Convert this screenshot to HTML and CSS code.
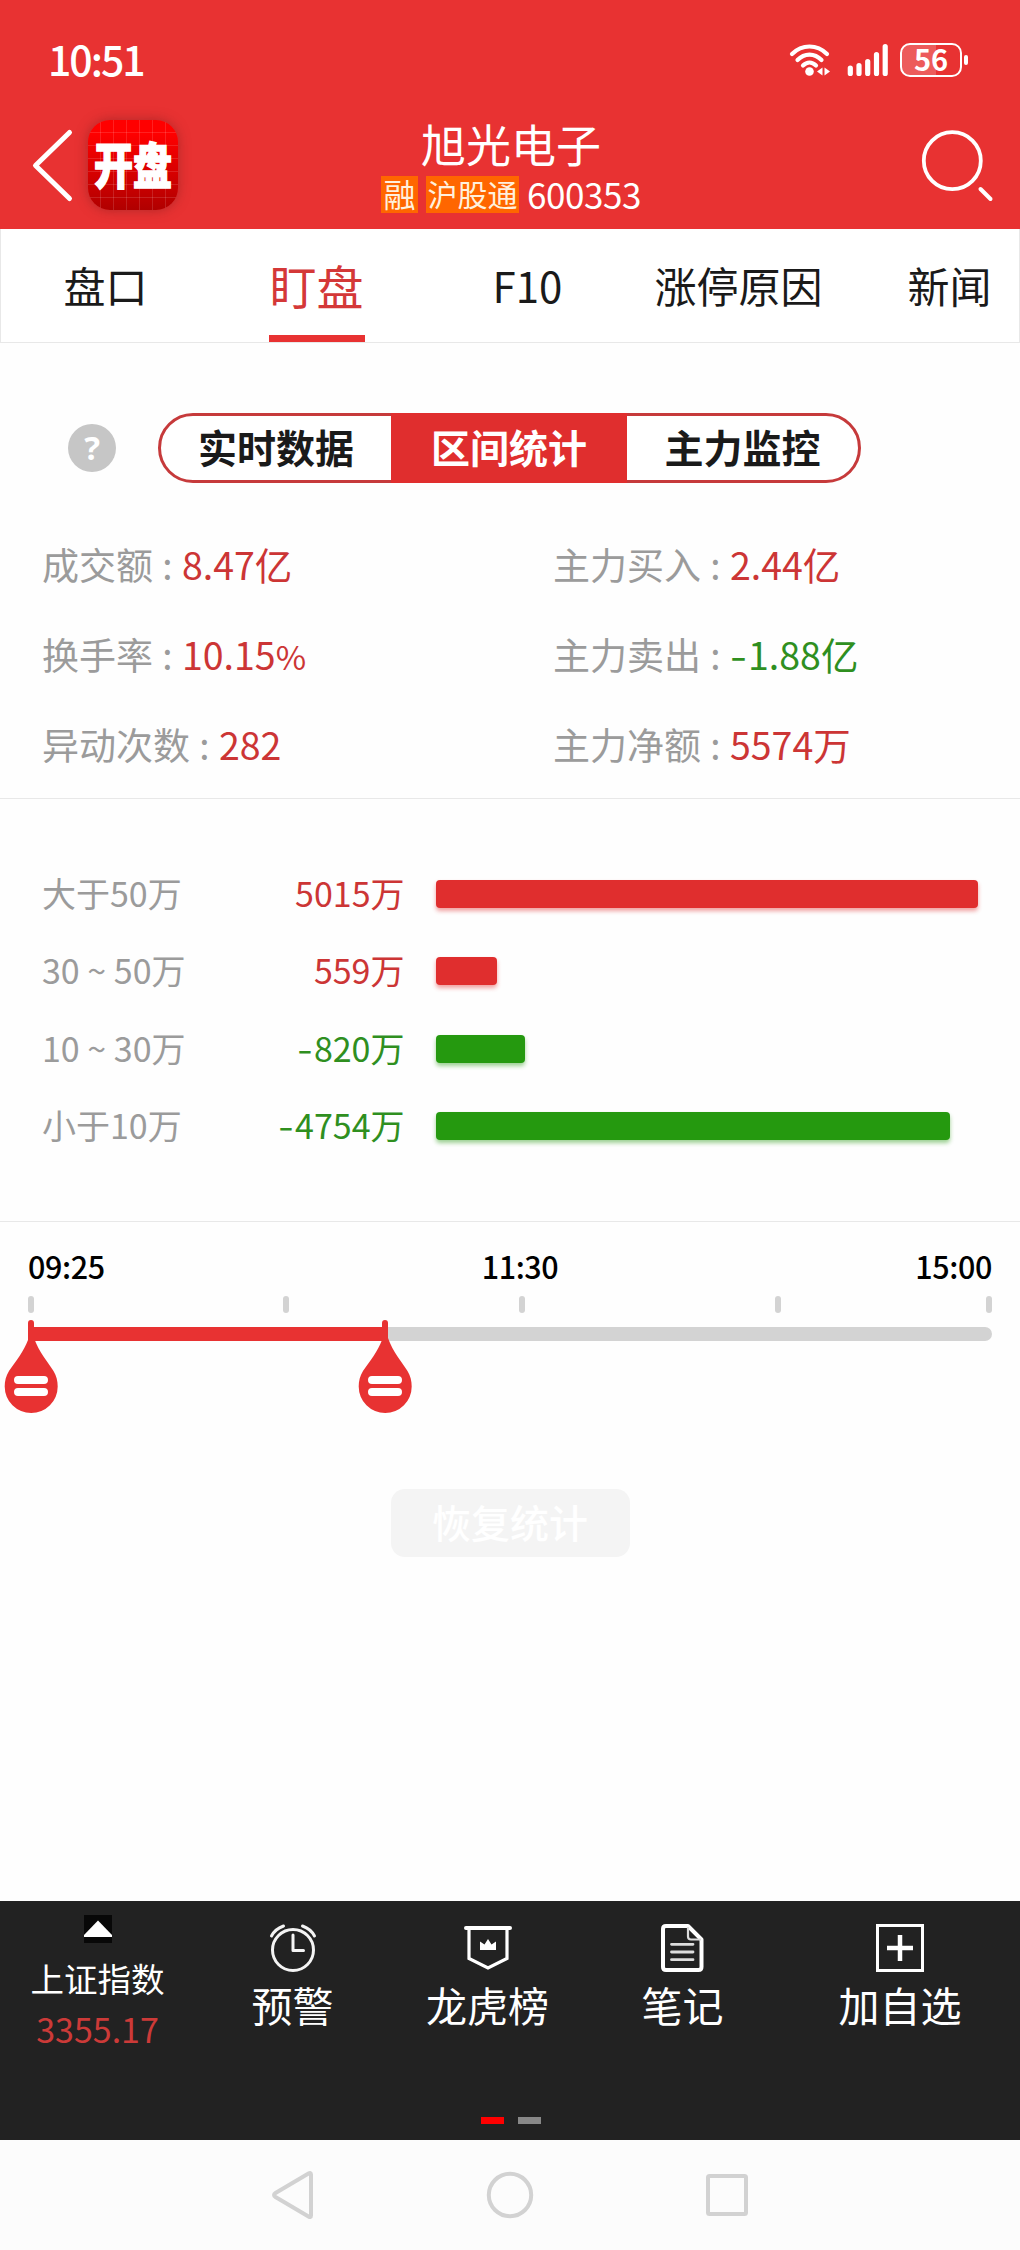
FILE: index.html
```html
<!DOCTYPE html>
<html lang="zh-CN">
<head>
<meta charset="utf-8">
<title>旭光电子 600353</title>
<link rel="stylesheet" href="styles.css">
</head>
<body>
<div class="app">
  <header class="header">
    <div class="status">
      <span class="clock">10:51</span>
      <div class="status-icons">
        <svg width="42" height="36" viewBox="0 0 42 36" fill="none" stroke="#fff" stroke-width="4.200" stroke-linecap="round">
          <path d="M3 12 C13 2 28 2 38 12"/>
          <path d="M8.500 18 C15.500 10.800 25.500 10.800 32.500 18"/>
          <path d="M14 23.500 C18 19.500 23 19.500 27 23.500"/>
          <circle cx="20.500" cy="29.500" r="4.300" fill="#fff" stroke="none"/>
          <path d="M28 29.500 L33.500 25.500 V33.500 Z M41 29.500 L35.500 25.500 V33.500 Z" fill="#fff" stroke="none"/>
        </svg>
        <svg width="42" height="34" viewBox="0 0 42 34" stroke="#fff" stroke-width="5.200" stroke-linecap="round">
          <path d="M3.300 25V30.400M12 22.500V30.400M20.700 18.500V30.400M29.500 11.500V30.400M38.200 3.600V30.400"/>
        </svg>
        <div class="battery"><span class="battery-text">56</span></div>
        <span class="battery-tip"></span>
      </div>
    </div>
    <div class="titlebar">
      <svg class="back" width="44" height="76" viewBox="0 0 44 76" fill="none" stroke="#fff" stroke-width="5" stroke-linecap="round" stroke-linejoin="round"><path d="M39.500 4.500 L5.500 37.500 L39.500 70.500"/></svg>
      <div class="logo"><span class="logo-text">开盘</span></div>
      <div class="title">
        <div class="name">旭光电子</div>
        <div class="meta"><span class="tag">融</span><span class="tag">沪股通</span><span class="code">600353</span></div>
      </div>
      <svg class="search" width="74" height="76" viewBox="0 0 74 76" fill="none" stroke="#fff"><circle cx="32.300" cy="32.700" r="28.500" stroke-width="3.800"/><path d="M60.500 61 L70.500 71" stroke-width="4" stroke-linecap="round"/></svg>
    </div>
  </header>

  <nav class="tabs">
    <span class="tab">盘口</span>
    <span class="tab active"><span class="tab-label">盯盘</span></span>
    <span class="tab">F10</span>
    <span class="tab">涨停原因</span>
    <span class="tab">新闻</span>
  </nav>

  <div class="switch-row">
    <span class="help"><span class="help-mark">?</span></span>
    <div class="segments">
      <span class="segment">实时数据</span>
      <span class="segment selected">区间统计</span>
      <span class="segment">主力监控</span>
    </div>
  </div>

  <section class="stats">
    <div class="stat"><span>成交额</span><span class="colon">:</span><span class="up">8.47亿</span></div>
    <div class="stat"><span>主力买入</span><span class="colon">:</span><span class="up">2.44亿</span></div>
    <div class="stat"><span>换手率</span><span class="colon">:</span><span class="up">10.15<span class="percent">%</span></span></div>
    <div class="stat"><span>主力卖出</span><span class="colon">:</span><span class="down"><span class="minus">-</span>1.88亿</span></div>
    <div class="stat"><span>异动次数</span><span class="colon">:</span><span class="up">282</span></div>
    <div class="stat"><span>主力净额</span><span class="colon">:</span><span class="up">5574万</span></div>
  </section>

  <section class="flows">
    <div class="flow"><span class="range">大于50万</span><span class="amount up">5015万</span><span class="bar bar-up" style="width:542px"></span></div>
    <div class="flow"><span class="range">30 ~ 50万</span><span class="amount up">559万</span><span class="bar bar-up" style="width:61px"></span></div>
    <div class="flow"><span class="range">10 ~ 30万</span><span class="amount down"><span class="minus">-</span>820万</span><span class="bar bar-down" style="width:89px"></span></div>
    <div class="flow"><span class="range">小于10万</span><span class="amount down"><span class="minus">-</span>4754万</span><span class="bar bar-down" style="width:514px"></span></div>
  </section>

  <section class="timeline">
    <div class="times"><span>09:25</span><span>11:30</span><span>15:00</span></div>
    <svg class="slider" width="1020" height="130" viewBox="0 0 1020 130">
      <defs>
        <g id="handle">
          <path d="M-3 33 C-3 31 -2 30 0 30 C2 30 3 31 3 33 V48 C8 62 16 71 22.500 81 C25.500 86 26.700 91 26.700 96.500 A26.500 26.500 0 0 1 -26.300 96.500 C-26.300 91 -25 86 -22 81 C-15 71 -7 61 -3 50 Z" fill="#e83232"/>
          <path d="M-13 90 H13 M-13 102 H13" stroke="#fff" stroke-width="8" stroke-linecap="round"/>
        </g>
      </defs>
      <g fill="#d3d3d3">
        <rect x="28" y="6" width="6" height="17" rx="3"/>
        <rect x="283" y="6" width="6" height="17" rx="3"/>
        <rect x="519" y="6" width="6" height="17" rx="3"/>
        <rect x="775" y="6" width="6" height="17" rx="3"/>
        <rect x="986" y="6" width="6" height="17" rx="3"/>
        <rect x="31" y="37" width="961" height="14" rx="7"/>
      </g>
      <rect x="31" y="37" width="354" height="14" fill="#e83232"/>
      <use href="#handle" x="31"/>
      <use href="#handle" x="385"/>
    </svg>
    <div class="reset">恢复统计</div>
  </section>

  <footer class="toolbar">
    <div class="tools">
      <div class="index">
        <svg width="28" height="28" viewBox="0 0 28 28"><path fill="#080808" d="M0 0H28V28H0Z"/><path d="M14 5.500 L28 20 V22 H0 V20 Z" fill="#fff"/></svg>
        <span class="index-name">上证指数</span>
        <span class="index-value">3355.17</span>
      </div>
      <div class="tool">
        <svg width="48" height="48" viewBox="0 0 48 48" fill="none" stroke="#f4f4f4" stroke-width="3" stroke-linecap="round" stroke-linejoin="round"><circle cx="24" cy="26" r="20.500"/><path d="M24 11V26.500H34.500M2.500 12 C5 7 9 4 14.500 2M45.500 12 C43 7 39 4 33.500 2"/></svg>
        <span>预警</span>
      </div>
      <div class="tool">
        <svg width="48" height="48" viewBox="0 0 48 48" fill="none" stroke="#fff" stroke-width="3.200" stroke-linecap="round"><path d="M2 4H46" stroke-width="4"/><path d="M5 5V34.500L24 44L43 34.500V5"/><path d="M16 17.500L20.500 20.500L24 15L27.500 20.500L32 17.500V26H16Z" fill="#fff" stroke="none"/></svg>
        <span>龙虎榜</span>
      </div>
      <div class="tool">
        <svg width="48" height="48" viewBox="0 0 48 48" fill="none" stroke="#fff" stroke-width="4" stroke-linejoin="round"><path d="M7 2H29L42.500 15.500V43Q42.500 46 39.500 46H7Q4 46 4 43V5Q4 2 7 2Z"/><path d="M29 3V12.500Q29 15.500 32 15.500H42" stroke-width="2.200" stroke="#ddd"/><path d="M12.500 20.300H34M12.500 28H34M12.500 35.700H34" stroke-width="2.800" stroke-linecap="round" stroke="#ddd"/></svg>
        <span>笔记</span>
      </div>
      <div class="tool">
        <svg width="48" height="48" viewBox="0 0 48 48" fill="none" stroke="#fff"><path d="M1.500 1.500H46.500V46.500H1.500Z" stroke-width="3"/><path d="M24 11V37M11 24H37" stroke-width="4.500"/></svg>
        <span>加自选</span>
      </div>
    </div>
    <div class="pager"><span class="page current"></span><span class="page"></span></div>
  </footer>

  <div class="sysnav">
    <svg width="48" height="50" viewBox="0 0 48 50"><path d="M42 4.500V45.500Q42 48 39.500 46.500L6.500 27Q3.500 25 6.500 23L39.500 3.500Q42 2 42 4.500Z"/></svg>
    <svg width="48" height="50" viewBox="0 0 48 50"><circle cx="24" cy="25" r="21.200"/></svg>
    <svg width="48" height="50" viewBox="0 0 48 50"><rect x="5" y="6" width="38" height="38" rx="1.500"/></svg>
  </div>
</div>
</body>
</html>
```

FILE: styles.css
```css
* { box-sizing: border-box; }

body {
  margin: 0;
  background: #fefefe;
  color: #1a1a1a;
  font-family: "Noto Sans CJK SC", "Noto Sans", sans-serif;
}

svg { display: block; flex: none; }

.app {
  width: 1020px;
  height: 2250px;
  display: flex;
  flex-direction: column;
  overflow: hidden;
}

.up { color: #cc3535; }
.down { color: #2f8f1f; }

/* header */
.header { height: 229px; background: #e83232; color: #fff; }

.status {
  height: 120px;
  padding: 0 52px 0 48px;
  display: flex;
  align-items: center;
  justify-content: space-between;
}

.clock {
  font-size: 41px;
  line-height: 50px;
  padding-bottom: 5px;
  font-weight: 500;
  letter-spacing: -2px;
}

.status-icons { display: flex; align-items: center; }
.status-icons svg:nth-child(2) { margin: 0 11px 0 16px; }

.battery {
  width: 62px;
  height: 34px;
  border: 2.5px solid #fff;
  border-radius: 10px;
  text-align: center;
  background: linear-gradient(90deg, rgba(255,255,255,.2) 34px, transparent 34px);
}

.battery-text {
  display: block;
  font: 700 29px/26px "Noto Sans CJK SC", sans-serif;
}

.battery-tip {
  width: 4px;
  height: 10px;
  margin-left: 2px;
  border-radius: 2px;
  background: #fff;
}

.titlebar {
  height: 109px;
  padding: 0 26px 0 30px;
  display: grid;
  grid-template-columns: 58px 90px 1fr 74px;
  align-items: start;
}

.back, .search { margin-top: 8px; }

.logo {
  width: 90px;
  height: 90px;
  border-radius: 22px;
  display: flex;
  align-items: center;
  justify-content: center;
  background:
    repeating-linear-gradient(90deg, transparent 0 12px, rgba(255,255,255,.13) 12px 13px),
    repeating-linear-gradient(180deg, transparent 0 12px, rgba(255,255,255,.13) 12px 13px),
    linear-gradient(#ff0000 15%, #b00000);
  box-shadow: 0 0 12px rgba(120,30,30,.5);
}

.logo-text {
  font-size: 39px;
  font-weight: 900;
  line-height: 40px;
  transform: scaleY(1.25) translateY(-2px);
  -webkit-text-stroke: 1.2px #fff;
}

.title {
  display: flex;
  flex-direction: column;
  align-items: center;
  padding-right: 76px;
}

.name { font-size: 45px; line-height: 50px; margin-top: -1px; }
.meta { display: flex; gap: 8px; margin-top: 7px; }

.tag {
  height: 37px;
  padding: 0 1.5px;
  background: #ff6600;
  color: #fff0dd;
  font-size: 30px;
  line-height: 34px;
}
.tag:first-child { width: 37px; padding: 0 2.5px; font-size: 32px; }

.code { font-size: 35px; line-height: 36px; letter-spacing: -.4px; }

/* tabs */
.tabs {
  height: 114px;
  display: grid;
  grid-template-columns: repeat(5, 211px);
  overflow: hidden;
  background: #fff;
  border: 1px solid #e8e8e8;
  border-top: 0;
  font-size: 42px;
  line-height: 112px;
  text-align: center;
}

.tab { height: 113px; margin-left: -2px; white-space: nowrap; }

.active { color: #d43838; font-size: 47px; height: 114px; }

.tab-label {
  display: block;
  width: 96px;
  height: 114px;
  margin: 0 auto;
  border-bottom: 8px solid #e83232;
}

/* view switch */
.switch-row {
  display: flex;
  align-items: center;
  height: 70px;
  margin: 70px 0 0 68px;
}

.help {
  width: 48px;
  height: 48px;
  border-radius: 50%;
  background: #c6c6c6;
  text-align: center;
}

.help-mark {
  display: block;
  color: #fff;
  font: 700 33px/48px "Noto Sans", sans-serif;
}

.segments {
  width: 703px;
  height: 70px;
  margin-left: 42px;
  display: grid;
  grid-template-columns: 230px 236px 231px;
  border: 3px solid #c63a3b;
  border-radius: 35px;
  background: #fff;
  text-align: center;
  font-size: 39px;
  font-weight: 700;
  line-height: 61px;
}

.selected {
  background: #e02e2e;
  color: #fff;
  box-shadow: 0 -3px #e02e2e, 0 3px #e02e2e;
}

/* totals */
.stats {
  height: 281px;
  margin-top: 35px;
  padding-left: 42px;
  display: grid;
  grid-template-columns: 511px 1fr;
  grid-auto-rows: 90px;
  border-bottom: 1px solid #e8e8e8;
}

.stat {
  display: flex;
  color: #9b9b9b;
  font-size: 37px;
  line-height: 92px;
}

.stat .up, .stat .down { font-size: 37.5px; }
.stat .percent { font-size: 33px; }
.colon { width: 29px; text-align: center; }
.minus { display: inline-block; transform: scaleX(1.3); margin: 0 3px 0 2px; }

/* money flow by order size */
.flows {
  height: 423px;
  padding: 56px 42px 0;
  border-bottom: 1px solid #e8e8e8;
}

.flow {
  height: 77.5px;
  display: grid;
  grid-template-columns: 200px 162.5px auto;
  align-items: center;
  justify-content: start;
  font-size: 34px;
  line-height: 40px;
}

.range { color: #9b9b9b; padding-bottom: 2px; white-space: pre; }
.amount { text-align: right; padding-bottom: 2px; }

.bar { height: 28px; margin-left: 31.5px; border-radius: 4px; }
.bar-up { background: #e02e2e; box-shadow: 0 3px 4px rgba(224,46,46,.45); }
.bar-down { background: #25990f; box-shadow: 0 3px 4px rgba(37,153,15,.45); }

/* time range */
.timeline {
  height: 679px;
  padding-top: 29px;
  display: flex;
  flex-direction: column;
  align-items: center;
}

.times {
  width: 964px;
  height: 39px;
  display: grid;
  grid-template-columns: 443px 98px 423px;
  color: #000;
  font-size: 30.5px;
  font-weight: 500;
  line-height: 31px;
  letter-spacing: -.4px;
}
.times span:nth-child(2) { text-align: center; }
.times span:nth-child(3) { text-align: right; }

.reset {
  width: 239px;
  height: 68px;
  margin-top: 69px;
  border-radius: 14px;
  background: #f4f4f4;
  color: #fff;
  text-align: center;
  font-size: 39px;
  font-weight: 500;
  line-height: 64px;
}

/* toolbar */
.toolbar { height: 239px; background: #222; color: #fff; }

.tools {
  height: 216px;
  display: grid;
  grid-template-columns: repeat(4, 195px) 240px;
}

.index, .tool {
  display: flex;
  flex-direction: column;
  align-items: center;
}

.index { padding-top: 14px; }
.index-name { font-size: 33.5px; line-height: 40px; margin-top: 15px; }
.index-value { font-size: 34px; line-height: 40px; margin-top: 11px; color: #cc3a38; }

.tool { padding-top: 23px; font-size: 41px; line-height: 50px; }
.tool span { margin-top: 6.5px; }

.pager { display: flex; justify-content: center; gap: 14px; padding-left: 1px; }
.page { width: 23px; height: 7px; background: #888; }
.current { background: #f00; }

/* system navigation */
.sysnav {
  height: 110px;
  padding: 0 269px;
  display: flex;
  align-items: center;
  justify-content: space-between;
  background: #fcfcfc;
}
.sysnav svg { fill: none; stroke: #d2d2d2; stroke-width: 4; }
```
